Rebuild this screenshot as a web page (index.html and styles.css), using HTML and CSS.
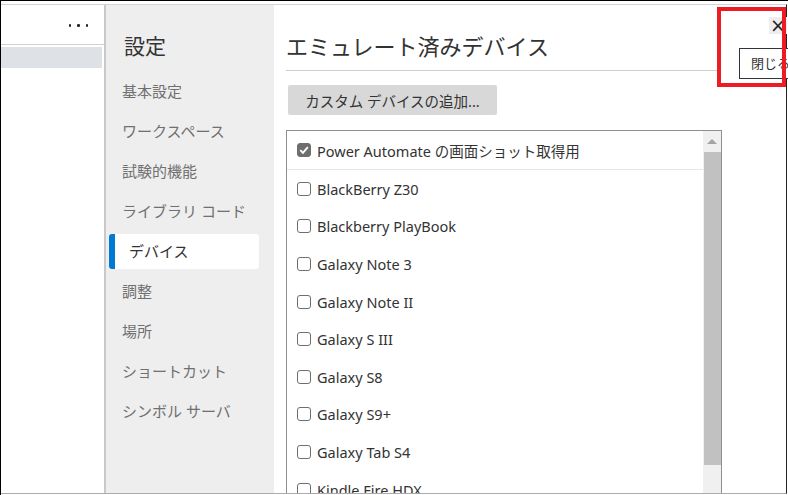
FILE: index.html
```html
<!DOCTYPE html>
<html lang="ja">
<head>
    <meta charset="UTF-8">
    <title>設定 - エミュレート済みデバイス</title>
    <link rel="stylesheet" href="styles.css">
</head>
<body>
    <div class="window">
        <div class="panes">
            <div class="left-pane">
                <div class="left-header">
                    <span class="dot"></span><span class="dot"></span><span class="dot"></span>
                </div>
                <div class="left-row"></div>
            </div>

            <div class="sidebar">
                <div class="sidebar-title">設定</div>
                <div class="nav">
                    <div class="nav-item">基本設定</div>
                    <div class="nav-item">ワークスペース</div>
                    <div class="nav-item">試験的機能</div>
                    <div class="nav-item">ライブラリ コード</div>
                    <div class="nav-item active">デバイス</div>
                    <div class="nav-item">調整</div>
                    <div class="nav-item">場所</div>
                    <div class="nav-item">ショートカット</div>
                    <div class="nav-item">シンボル サーバ</div>
                </div>
            </div>

            <div class="main">
                <div class="content">
                    <div class="page-title">エミュレート済みデバイス</div>
                    <button class="add-btn">カスタム デバイスの追加...</button>
                    <div class="listbox">
                        <div class="items">
                            <div class="item first">
                                <span class="check checked">
                                    <svg width="14" height="14" viewBox="0 0 14 14"><path d="M3.3 7.2 L5.9 9.8 L10.8 4.2" fill="none" stroke="#fff" stroke-width="1.9"/></svg>
                                </span>
                                Power Automate の画面ショット取得用
                            </div>
                            <div class="item"><span class="check"></span>BlackBerry Z30</div>
                            <div class="item"><span class="check"></span>Blackberry PlayBook</div>
                            <div class="item"><span class="check"></span>Galaxy Note 3</div>
                            <div class="item"><span class="check"></span>Galaxy Note II</div>
                            <div class="item"><span class="check"></span>Galaxy S III</div>
                            <div class="item"><span class="check"></span>Galaxy S8</div>
                            <div class="item"><span class="check"></span>Galaxy S9+</div>
                            <div class="item"><span class="check"></span>Galaxy Tab S4</div>
                            <div class="item"><span class="check"></span>Kindle Fire HDX</div>
                        </div>
                        <div class="scrollbar">
                            <div class="scroll-up"></div>
                            <div class="scroll-thumb"></div>
                        </div>
                    </div>
                </div>

                <div class="close-btn">&times;</div>
                <div class="tooltip">閉じる</div>
                <div class="highlight"></div>
            </div>
        </div>
    </div>
</body>
</html>
```

FILE: styles.css
```css
body {
    margin: 0;
    background: #fff;
    font-family: "Segoe UI", "Noto Sans", "Noto Sans CJK JP", sans-serif;
    color: #333;
    overflow: hidden;
}
.window {
    width: 788px;
    height: 495px;
    box-sizing: border-box;
    border-top: 1px solid #000;
    border-left: 1px solid #000;
    padding-top: 3px;
    padding-bottom: 1px;
    padding-right: 1px;
}
.panes {
    display: flex;
    height: 100%;
    box-sizing: border-box;
    border-top: 1px solid #d4d4d4;
    border-bottom: 1px solid #ababab;
    border-right: 1px solid #222;
}

/* left pane */
.left-pane {
    width: 103px;
    border-right: 2px solid #c9c9c9;
    background: #fff;
}
.left-header {
    height: 40px;
    border-bottom: 1px solid #d0d0d0;
    display: flex;
    align-items: center;
    justify-content: flex-end;
    gap: 6px;
    padding-right: 16px;
    box-sizing: border-box;
    padding-top: 2px;
}
.dot {
    width: 2.5px;
    height: 2.5px;
    border-radius: 50%;
    background: #222;
}
.left-row {
    margin-top: 2px;
    width: 101px;
    height: 21px;
    background: #dee1e6;
}

/* settings sidebar */
.sidebar {
    width: 168px;
    background: #eeeeee;
}
.sidebar-title {
    padding: 26px 0 0 18px;
    line-height: 30px;
    font-size: 21px;
    color: #333;
}
.nav {
    margin-top: 12.5px;
}
.nav-item {
    margin-left: 3px;
    width: 150px;
    height: 35px;
    margin-bottom: 5px;
    box-sizing: border-box;
    padding-left: 13px;
    padding-bottom: 2px;
    display: flex;
    align-items: center;
    font-size: 15px;
    color: #707070;
    border-radius: 3px;
}
.nav-item.active {
    background: #fff;
    color: #333;
    border-left: 6px solid #0078d4;
    padding-left: 14px;
}

/* main area */
.main {
    flex: 1;
    position: relative;
    background: #fff;
}
.content {
    width: 436px;
    margin-left: 12px;
    display: flex;
    flex-direction: column;
    height: 100%;
}
.page-title {
    padding-top: 26px;
    padding-bottom: 9px;
    line-height: 30px;
    font-size: 22px;
    color: #333;
    border-bottom: 1px solid #cfcfcf;
    width: 435px;
}
.add-btn {
    align-self: flex-start;
    margin: 14px 0 0 2px;
    width: 209px;
    height: 30px;
    border: none;
    border-radius: 2px;
    background: #d8d8d8;
    color: #333;
    font-family: inherit;
    font-size: 14.5px;
    padding: 0;
}
.listbox {
    flex: 1;
    margin-top: 15px;
    border: 1px solid #8f8f8f;
    border-bottom: none;
    display: flex;
    overflow: hidden;
}
.items {
    flex: 1;
}
.item {
    height: 37.6px;
    display: flex;
    align-items: center;
    padding-left: 10px;
    font-size: 14.5px;
    color: #333;
}
.item.first {
    height: 38px;
    border-bottom: 1px solid #e6e6e6;
}
.check {
    width: 14px;
    height: 14px;
    box-sizing: border-box;
    border: 1px solid #6e6e6e;
    border-radius: 3px;
    margin-right: 6px;
    flex-shrink: 0;
    position: relative;
}
.check.checked {
    background: #6e6e6e;
}
.check svg {
    position: absolute;
    left: -1px;
    top: -1px;
}
.scrollbar {
    width: 18px;
    background: #f0f0f0;
    display: flex;
    flex-direction: column;
    align-items: center;
}
.scroll-up {
    width: 0;
    height: 0;
    border-left: 5px solid transparent;
    border-right: 5px solid transparent;
    border-bottom: 5px solid #a3a3a3;
    margin: 8px 0 8px;
}
.scroll-thumb {
    width: 17px;
    height: 313px;
    background: #c1c1c1;
}

/* close button, tooltip, highlight box */
.close-btn {
    position: absolute;
    top: 12px;
    left: 495px;
    width: 18px;
    height: 17px;
    background: #eeeeee;
    font-size: 19px;
    line-height: 16px;
    text-align: center;
    color: #222;
    font-family: "DejaVu Sans", sans-serif;
}
.tooltip {
    position: absolute;
    top: 43px;
    left: 465px;
    height: 29px;
    line-height: 29px;
    padding: 0 12px 0 11px;
    border: 1px solid #333;
    background: #fff;
    font-size: 13px;
    white-space: nowrap;
}
.highlight {
    position: absolute;
    top: 2px;
    left: 443px;
    width: 69px;
    height: 80px;
    box-sizing: border-box;
    border: 4px solid #ed1c24;
}
```
